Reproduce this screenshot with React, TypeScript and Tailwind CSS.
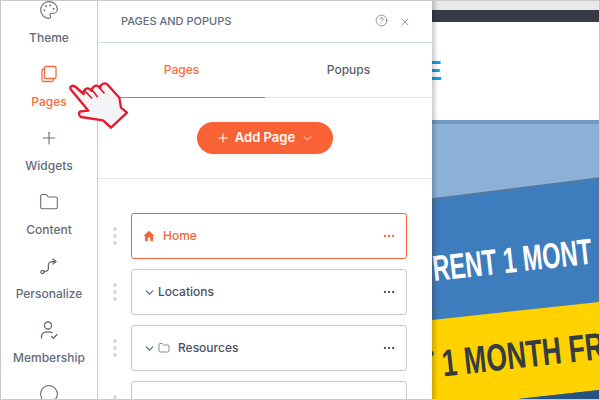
import { ChevronDown, CircleHelp, Ellipsis, Folder, MessageCircle, Palette, Plus, X } from "lucide-react";
import type { ReactNode } from "react";

function PagesIcon() {
    return (
        <svg width="20" height="20" viewBox="0 0 20 20" fill="none" stroke="currentColor" strokeWidth="1.3">
            <rect x="5.5" y="2.5" width="11.5" height="12" rx="1.5" />
            <path d="M5.5 5H4.5C3.4 5 3 5.6 3 6.5V16c0 1 .6 1.5 1.5 1.5H13c1 0 1.5-.5 1.5-1.5v-1" />
        </svg>
    );
}

function PersonalizeIcon() {
    return (
        <svg width="20" height="20" viewBox="0 0 20 20" fill="none" stroke="currentColor" strokeWidth="1.3" strokeLinecap="round" strokeLinejoin="round">
            <circle cx="3.5" cy="16" r="1.6" />
            <path d="M5 15.5c3.5 0 4.5-1 4.5-3.5S8.500 8 10.500 6.500C12 5.500 14 5.500 16.500 5.500" />
            <path d="M14 3l3 2.500-3 2.500" />
        </svg>
    );
}

function MemberIcon() {
    return (
        <svg width="20" height="20" viewBox="0 0 20 20" fill="none" stroke="currentColor" strokeWidth="1.3" strokeLinecap="round" strokeLinejoin="round">
            <circle cx="9" cy="5.500" r="3.500" />
            <path d="M2.500 18v-1.500C2.500 13.500 5 11.800 9 11.800c1.500 0 2.800.2 4 .8" />
            <path d="M12.500 16.500l2 1.800 3.500-3.800" />
        </svg>
    );
}

function HomeIcon() {
    return (
        <svg width="12" height="12" viewBox="0 0 12 12" fill="currentColor">
            <path d="M6 .8 11.500 6H10v5H7.300V7.600H4.700V11H2V6H.5z" />
        </svg>
    );
}

function Hand() {
    return (
        <svg className="absolute left-[66px] top-[78px]" width="64" height="52" viewBox="198 234 192 156" fill="none" stroke="#e8192c" strokeLinecap="round" strokeLinejoin="round">
            <path
                d="M209 265C205 255 216 251 224 258L248 279C246 268 256 258 266 264L272 270C272 258 284 250 292 256L297 262C298 248 312 243 320 251L355 290 360 320 378 335 330 380 306 358 240 348C232 344 232 332 240 331L262 329z"
                fill="#f3f4f7"
                strokeWidth="7"
            />
            <path d="M250 268 272 291M272 265 289 287M296 260 309 276" strokeWidth="5" />
        </svg>
    );
}

function SideItem({ icon, label, active }: { icon: ReactNode; label: string; active?: boolean }) {
    return (
        <div className={active ? "flex h-16 shrink-0 flex-col items-center pt-[11px] text-[#f96a3c]" : "flex h-16 shrink-0 flex-col items-center pt-[11px] text-[#636b7b]"}>
            <div className="flex h-5 items-center justify-center">{icon}</div>
            <span className="mt-[10px] text-[12px] font-medium leading-4">{label}</span>
        </div>
    );
}

function PageRow({ children, active, hideDots }: { children?: ReactNode; active?: boolean; hideDots?: boolean }) {
    return (
        <div className="flex items-center">
            <div className="flex w-[33px] shrink-0 flex-col items-center gap-[3px] pl-[1px]">
                {[0, 1, 2].map((i) => (
                    <div key={i} className="h-1 w-1 rounded-full bg-[#d9d9d9]" />
                ))}
            </div>
            <div
                className={
                    active
                        ? "flex h-[46px] w-[276px] shrink-0 items-center rounded-[3px] border border-[#f96234] pl-[11px] pr-[10px] text-[#f96234]"
                        : "flex h-[46px] w-[276px] shrink-0 items-center rounded-[3px] border border-[#c8c8c8] pl-[11px] pr-[10px] text-[#4b5160]"
                }
            >
                {children}
                {!hideDots && <Ellipsis size={14} className="ml-auto" />}
            </div>
        </div>
    );
}

function Preview() {
    return (
        <div className="relative min-w-0 flex-1 overflow-hidden bg-white">
            <div className="h-[9px] bg-[#e9e9e9]" />
            <div className="h-3 bg-[#383b46]" />
            <div className="flex h-[98px] items-center">
                <span className="text-[27px] font-bold leading-none text-[#0f9fe8] [font-family:'Liberation_Sans',sans-serif] -ml-[8px]">E</span>
            </div>
            <svg className="block" width="167" height="280" viewBox="433 119 167 280">
                <rect x="433" y="119" width="167" height="280" fill="#8cb1d9" />
                <rect x="433" y="119" width="167" height="4" fill="#7398c2" />
                <polygon points="433,198 600,177 600,399 433,399" fill="#3e7dbd" stroke="#5d7896" strokeWidth="1.500" />
                <polygon points="433,319 600,301 600,389 510,399 433,399" fill="#ffd200" />
                <polygon points="600,389 510,399 600,399" fill="#28527f" />
                <g fontFamily="'Liberation Sans', sans-serif" fontWeight="700">
                    <text transform="translate(435 280) rotate(-6.300)" fontSize="36" fill="#fff" textLength="160" lengthAdjust="spacingAndGlyphs">
                        RENT 1 MONT
                    </text>
                    <text transform="translate(421 378) rotate(-6.300)" fontSize="38" fill="#333d42" textLength="222" lengthAdjust="spacingAndGlyphs">
                        T 1 MONTH FREE
                    </text>
                </g>
            </svg>
            <div className="absolute inset-y-0 left-0 w-[6px] bg-gradient-to-r from-black/20 to-transparent" />
        </div>
    );
}

export default function App() {
    return (
        <div className="relative flex h-[400px] w-[600px] overflow-hidden border border-[#c9c9c9] bg-white [font-family:Inter,sans-serif]">
            <nav className="-mt-[12px] flex w-[97px] shrink-0 flex-col border-r border-[#c9c9c9]">
                <SideItem icon={<Palette size={20} strokeWidth={1.3} />} label="Theme" />
                <SideItem icon={<PagesIcon />} label="Pages" active />
                <SideItem icon={<Plus size={20} strokeWidth={1.3} />} label="Widgets" />
                <SideItem icon={<Folder size={20} strokeWidth={1.3} />} label="Content" />
                <SideItem icon={<PersonalizeIcon />} label="Personalize" />
                <SideItem icon={<MemberIcon />} label="Membership" />
                <SideItem icon={<MessageCircle size={20} strokeWidth={1.3} />} label="Help" />
            </nav>

            <div className="flex w-[334px] shrink-0 flex-col">
                <div className="flex h-[42px] shrink-0 items-center border-b border-[#d5dfe0] pl-[23px] pr-[21px] text-[#636b7b]">
                    <span className="text-[11px] font-medium">PAGES AND POPUPS</span>
                    <CircleHelp size={13} strokeWidth={1.3} className="ml-auto -translate-y-[1px]" />
                    <X size={12} strokeWidth={1.3} className="ml-[11px]" />
                </div>
                <div className="flex h-[55px] shrink-0 text-[12px] font-medium">
                    <div className="flex w-1/2 items-center justify-center border-b border-[#f0643a] text-[#f96a3c]">Pages</div>
                    <div className="flex w-1/2 items-center justify-center border-b border-[#dfe2e4] text-[#585e6c]">Popups</div>
                </div>
                <div className="flex h-[81px] shrink-0 items-start justify-center border-b border-[#e3e6e8] pt-6">
                    <button className="flex h-8 w-[136px] items-center justify-center rounded-full bg-[#f96234] text-[13px] font-semibold text-white">
                        <Plus size={14} strokeWidth={1.8} />
                        <span className="ml-[5px]">Add Page</span>
                        <ChevronDown size={13} strokeWidth={1.8} className="ml-[6px]" />
                    </button>
                </div>
                <div className="flex flex-col gap-[10px] pt-[34px] text-[12px] font-medium">
                    <PageRow active>
                        <HomeIcon />
                        <span className="ml-[8px]">Home</span>
                    </PageRow>
                    <PageRow>
                        <ChevronDown size={13} strokeWidth={2.2} className="text-[#5a6478]" />
                        <span className="ml-[2px]">Locations</span>
                    </PageRow>
                    <PageRow>
                        <ChevronDown size={13} strokeWidth={2.2} className="text-[#5a6478]" />
                        <Folder size={12} strokeWidth={1.3} className="ml-[2px]" />
                        <span className="ml-[8px]">Resources</span>
                    </PageRow>
                    <PageRow hideDots />
                </div>
            </div>

            <Preview />
            <Hand />
        </div>
    );
}
